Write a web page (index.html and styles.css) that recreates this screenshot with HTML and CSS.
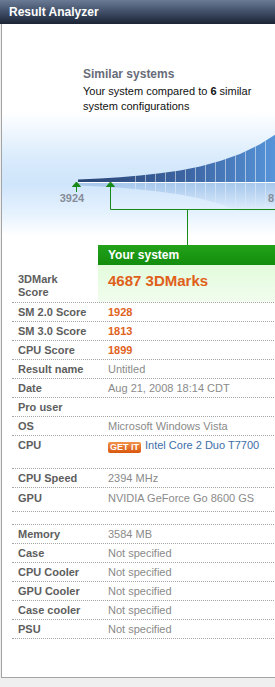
FILE: index.html
```html
<!DOCTYPE html>
<html>
<head>
    <link rel="stylesheet" href="styles.css">
    <title>Result Analyzer</title>
</head>
<body>
    <div class="page">
        <div class="titlebar">Result Analyzer</div>
        <div class="panel">
            <div class="similar">
                <div class="intro">
                    <h2>Similar systems</h2>
                    <p>Your system compared to <b>6</b> similar system configurations</p>
                </div>
                <svg class="chart" width="700" height="131" viewBox="0 0 700 131">
                    <defs>
                        <linearGradient id="curveFill" gradientUnits="userSpaceOnUse" x1="78" y1="0" x2="300" y2="0">
                            <stop offset="0" stop-color="#2a4575"/>
                            <stop offset="0.5" stop-color="#3d66a4"/>
                            <stop offset="1" stop-color="#5da1e8"/>
                        </linearGradient>
                        <linearGradient id="reflFill" gradientUnits="userSpaceOnUse" x1="0" y1="69" x2="0" y2="98">
                            <stop offset="0" stop-color="#6b9bd6" stop-opacity="0.4"/>
                            <stop offset="1" stop-color="#6b9bd6" stop-opacity="0"/>
                        </linearGradient>
                        <linearGradient id="lineFade" gradientUnits="userSpaceOnUse" x1="0" y1="69" x2="0" y2="98">
                            <stop offset="0" stop-color="#fff" stop-opacity="0.45"/>
                            <stop offset="1" stop-color="#fff" stop-opacity="0"/>
                        </linearGradient>
                        <clipPath id="curveClip">
                            <path d="M78 68 L78 65.4 L100 64.4 L120 63.2 L140 61.5 L160 59.3 L180 56.4 L200 52.4 L220 47.1 L240 39.9 L260 30.3 L280 17.4 L300 0.1 L310 -10 L310 68 Z"/>
                        </clipPath>
                        <clipPath id="reflClip">
                            <path d="M78 69 L78 71.6 L100 72.6 L120 73.8 L140 75.5 L160 77.7 L180 80.6 L200 84.6 L220 89.9 L240 97.1 L260 106.7 L280 119.6 L300 136.9 L310 147 L310 69 Z"/>
                        </clipPath>
                    </defs>
                    <g transform="translate(-2 0)">
                        <path d="M78 68 L78 65.4 L100 64.4 L120 63.2 L140 61.5 L160 59.3 L180 56.4 L200 52.4 L220 47.1 L240 39.9 L260 30.3 L280 17.4 L300 0.1 L310 -10 L310 68 Z" fill="url(#curveFill)"/>
                        <path d="M78 69 L78 71.6 L100 72.6 L120 73.8 L140 75.5 L160 77.7 L180 80.6 L200 84.6 L220 89.9 L240 97.1 L260 106.7 L280 119.6 L300 136.9 L310 147 L310 69 Z" fill="url(#reflFill)"/>
                        <g clip-path="url(#curveClip)" stroke="#fff" stroke-opacity="0.5">
                            <path d="M135.5 0V68M145.5 0V68M155.5 0V68M165.5 0V68M175.5 0V68M185.5 0V68M195.5 0V68M205.5 0V68M215.5 0V68M225.5 0V68M235.5 0V68M245.5 0V68M255.5 0V68M265.5 0V68M275.5 0V68M285.5 0V68M295.5 0V68M305.5 0V68"/>
                        </g>
                        <g clip-path="url(#reflClip)" stroke="url(#lineFade)">
                            <path d="M135.5 69V100M145.5 69V100M155.5 69V100M165.5 69V100M175.5 69V100M185.5 69V100M195.5 69V100M205.5 69V100M215.5 69V100M225.5 69V100M235.5 69V100M245.5 69V100M255.5 69V100M265.5 69V100M275.5 69V100M285.5 69V100M295.5 69V100M305.5 69V100"/>
                        </g>
                        <line x1="78" y1="68.5" x2="700" y2="68.5" stroke="#fff" stroke-opacity="0.9"/>

                        <g class="marker">
                            <polygon points="76.5,68 72.5,72.5 80.5,72.5"/>
                            <path d="M76.5 72V78"/>
                            <polygon points="110.5,68 106.5,72.5 114.5,72.5"/>
                            <path d="M110.5 72V95.5H700M187.5 95.5V131"/>
                        </g>
                        <text class="axis" x="72" y="88" text-anchor="middle">3924</text>
                        <text class="axis" x="268" y="88">8</text>
                    </g>
                </svg>
            </div>

            <div class="results">
                <div class="row head">
                    <div class="label"></div>
                    <div class="value">Your system</div>
                </div>
                <div class="row score">
                    <div class="label">3DMark<br>Score</div>
                    <div class="value">4687 3DMarks</div>
                </div>
                <div class="row">
                    <div class="label">SM 2.0 Score</div>
                    <div class="value num">1928</div>
                </div>
                <div class="row">
                    <div class="label">SM 3.0 Score</div>
                    <div class="value num">1813</div>
                </div>
                <div class="row">
                    <div class="label">CPU Score</div>
                    <div class="value num">1899</div>
                </div>
                <div class="row">
                    <div class="label">Result name</div>
                    <div class="value">Untitled</div>
                </div>
                <div class="row">
                    <div class="label">Date</div>
                    <div class="value">Aug 21, 2008 18:14 CDT</div>
                </div>
                <div class="row">
                    <div class="label">Pro user</div>
                    <div class="value"></div>
                </div>
                <div class="row">
                    <div class="label">OS</div>
                    <div class="value">Microsoft Windows Vista</div>
                </div>
                <div class="row tall">
                    <div class="label">CPU</div>
                    <div class="value"><span class="getit">GET IT</span><a href="#">Intel Core 2 Duo T7700</a></div>
                </div>
                <div class="row">
                    <div class="label">CPU Speed</div>
                    <div class="value">2394 MHz</div>
                </div>
                <div class="row gpu">
                    <div class="label">GPU</div>
                    <div class="value">NVIDIA GeForce Go 8600 GS</div>
                </div>
                <div class="row spacer">
                    <div class="label"></div>
                    <div class="value"></div>
                </div>
                <div class="row">
                    <div class="label">Memory</div>
                    <div class="value">3584 MB</div>
                </div>
                <div class="row">
                    <div class="label">Case</div>
                    <div class="value">Not specified</div>
                </div>
                <div class="row">
                    <div class="label">CPU Cooler</div>
                    <div class="value">Not specified</div>
                </div>
                <div class="row">
                    <div class="label">GPU Cooler</div>
                    <div class="value">Not specified</div>
                </div>
                <div class="row">
                    <div class="label">Case cooler</div>
                    <div class="value">Not specified</div>
                </div>
                <div class="row">
                    <div class="label">PSU</div>
                    <div class="value">Not specified</div>
                </div>
            </div>
        </div>
    </div>
</body>
</html>
```

FILE: styles.css
```css
html, body {
    margin: 0;
    overflow: hidden;
}
body {
    background-color: #efefef;
    font-family: "Liberation Sans", Arial, sans-serif;
    font-size: 11px;
    color: #111111;
}
.page {
    width: 700px;
}
.titlebar {
    height: 24px;
    line-height: 24px;
    padding-left: 9px;
    color: #ffffff;
    font-weight: bold;
    font-size: 12px;
    background: linear-gradient(to bottom, #6b7b95 0%, #44536c 45%, #1c2434 100%);
}
.panel {
    margin-left: 1px;
    background-color: #ffffff;
    border-left: 1px solid #a3a3a3;
    border-bottom: 1px solid #a3a3a3;
    padding-bottom: 38px;
}
.similar {
    height: 221px;
    background: linear-gradient(to bottom, #ffffff 0px, #ffffff 88px, #d9ebfc 135px, #cfe5fb 160px, #e6f2fe 190px, #ffffff 212px);
}
.intro {
    padding: 42px 0 0 81px;
}
.intro h2 {
    margin: 0;
    font-size: 12px;
    line-height: 16px;
    color: #676c79;
}
.intro p {
    margin: 2px 0 0 0;
    width: 175px;
    line-height: 15px;
}
.chart {
    display: block;
}
.marker {
    fill: #178a17;
    stroke: #178a17;
    stroke-width: 1;
}
.marker path {
    fill: none;
}
.axis {
    font-family: "Liberation Sans", Arial, sans-serif;
    font-size: 11px;
    font-weight: bold;
    fill: #868d99;
}
.results {
    margin-left: 10px;
}
.row {
    display: grid;
    grid-template-columns: 86px 1fr;
    height: 18px;
    line-height: 18px;
    border-bottom: 1px dotted #a6a6a6;
}
.label {
    padding-left: 6px;
    font-weight: bold;
    color: #5e5e5e;
}
.value {
    padding-left: 10px;
    color: #8a8a8a;
    white-space: nowrap;
}
.value.num {
    color: #e0621c;
    font-weight: bold;
}
.row.head {
    height: 20px;
    line-height: 20px;
    border-bottom: none;
}
.row.head .value {
    color: #ffffff;
    font-weight: bold;
    font-size: 12px;
    background: linear-gradient(to bottom, #23a21a, #138d0d);
}
.row.score {
    height: 37px;
}
.row.score .label {
    padding-top: 8px;
    line-height: 13px;
}
.row.score .value {
    padding-top: 7px;
    line-height: 17px;
    font-size: 15px;
    font-weight: bold;
    color: #e0601a;
    background: linear-gradient(to bottom, #e3fbdc, #f1fdee);
}
.row.tall {
    height: 32px;
}
.row.gpu {
    height: 23px;
    line-height: 20px;
}
.row.spacer {
    height: 12px;
}
.getit {
    display: inline-block;
    height: 11px;
    line-height: 11px;
    padding: 0 2px;
    margin-right: 4px;
    vertical-align: -1px;
    font-size: 9px;
    font-weight: bold;
    color: #ffffff;
    border-radius: 2px;
    background: linear-gradient(to bottom, #f2924a, #d9570f);
}
.value a {
    color: #3c6ea8;
    text-decoration: none;
}
```
